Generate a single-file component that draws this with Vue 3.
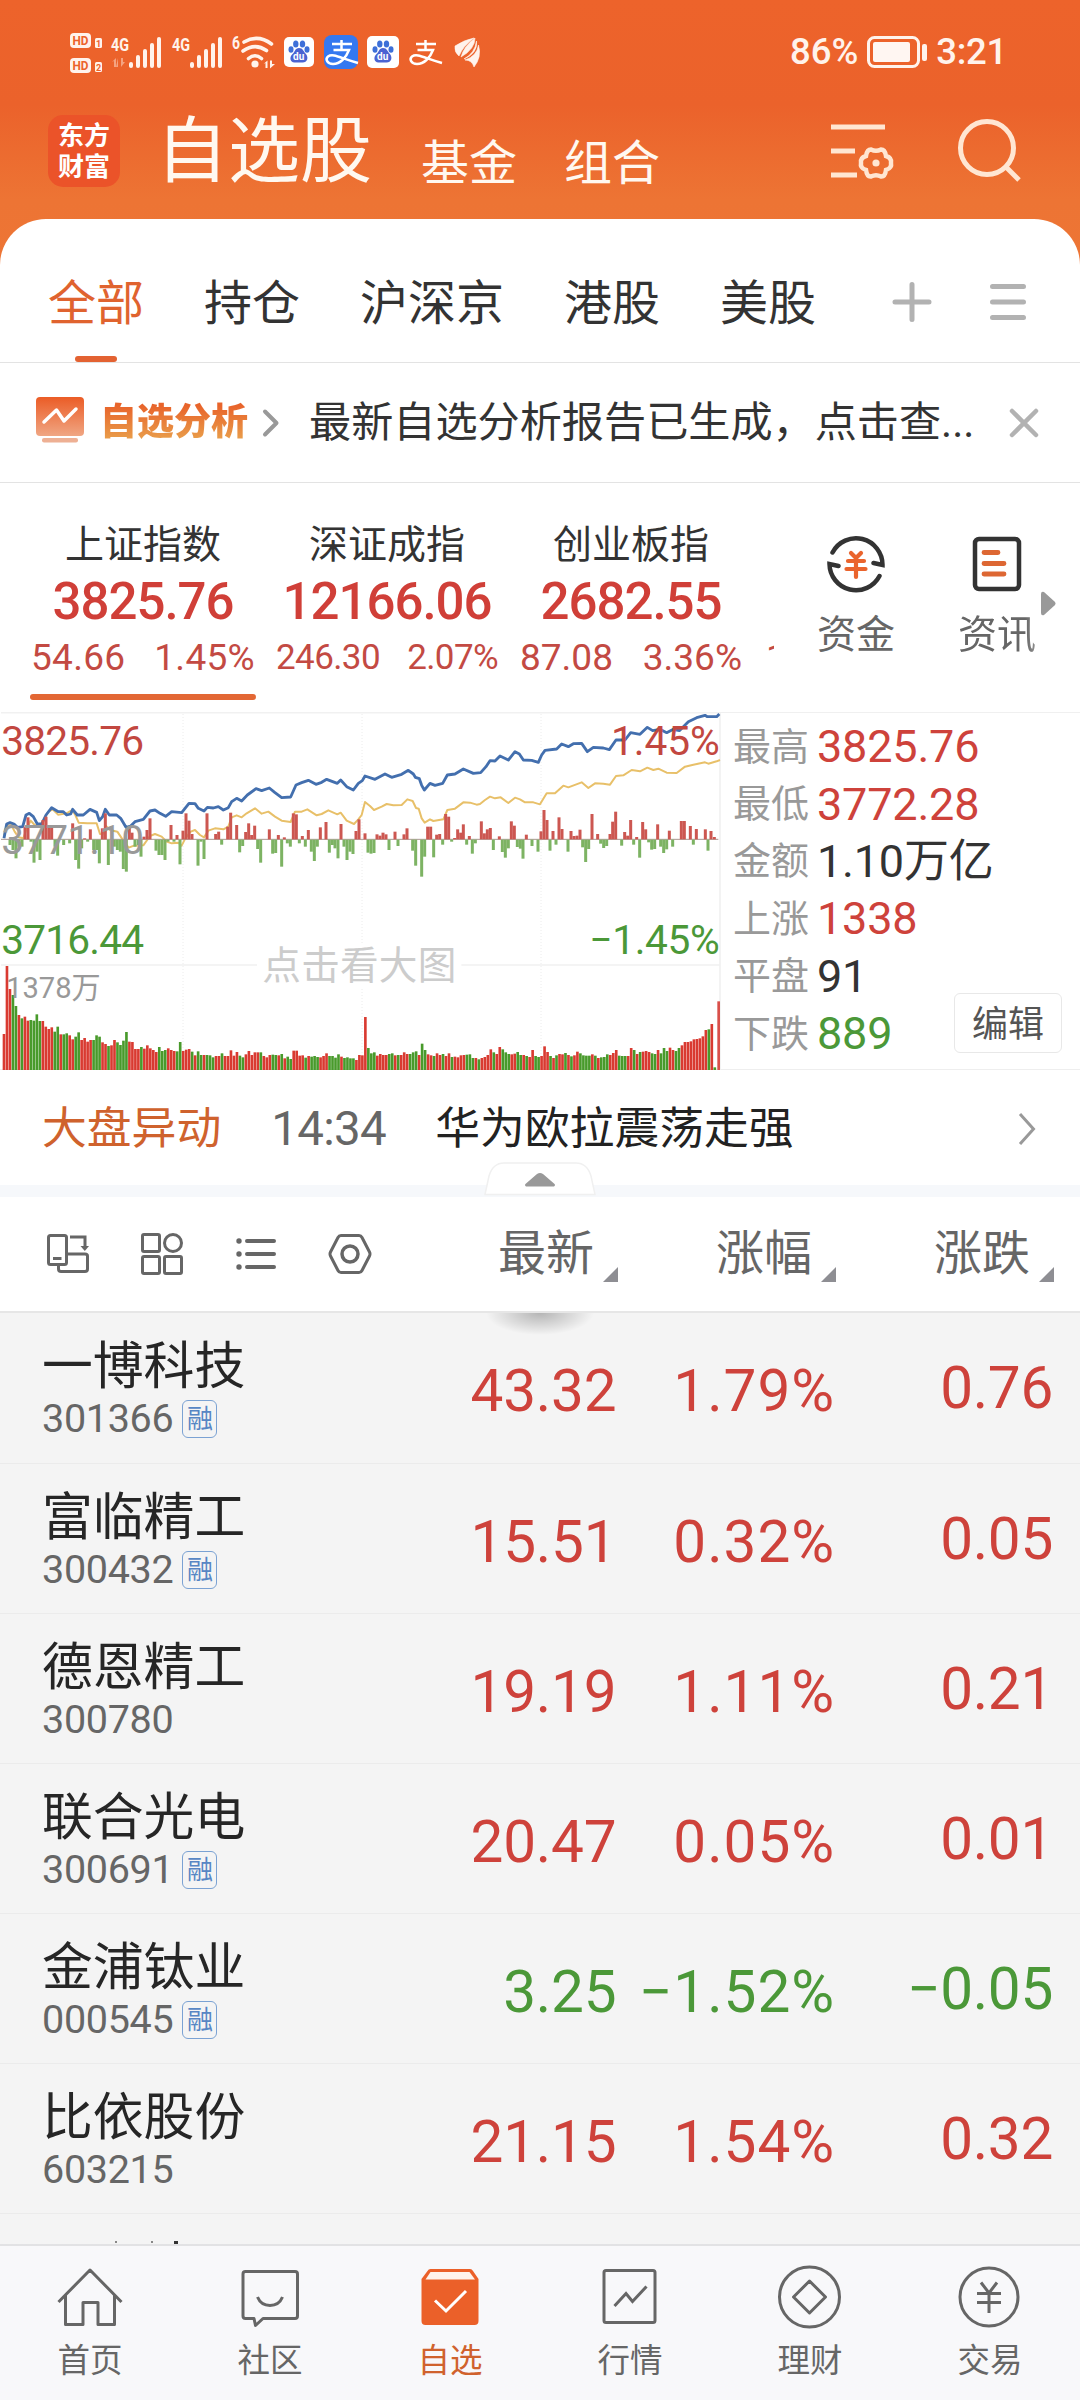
<script setup>
const tabs = ['全部', '持仓', '沪深京', '港股', '美股']

const indices = [
  { name: '上证指数', value: '3825.76', diff: '54.66', pct: '1.45%' },
  { name: '深证成指', value: '12166.06', diff: '246.30', pct: '2.07%', small: true },
  { name: '创业板指', value: '2682.55', diff: '87.08', pct: '3.36%' },
]

const stats = [
  { label: '最高', value: '3825.76', tone: 'up' },
  { label: '最低', value: '3772.28', tone: 'up' },
  { label: '金额', value: '1.10万亿', tone: 'flat' },
  { label: '上涨', value: '1338', tone: 'up' },
  { label: '平盘', value: '91', tone: 'flat' },
  { label: '下跌', value: '889', tone: 'down' },
]

const stocks = [
  { name: '一博科技', code: '301366', margin: true, price: '43.32', pct: '1.79%', diff: '0.76', tone: 'up' },
  { name: '富临精工', code: '300432', margin: true, price: '15.51', pct: '0.32%', diff: '0.05', tone: 'up' },
  { name: '德恩精工', code: '300780', margin: false, price: '19.19', pct: '1.11%', diff: '0.21', tone: 'up' },
  { name: '联合光电', code: '300691', margin: true, price: '20.47', pct: '0.05%', diff: '0.01', tone: 'up' },
  { name: '金浦钛业', code: '000545', margin: true, price: '3.25', pct: '−1.52%', diff: '−0.05', tone: 'down' },
  { name: '比依股份', code: '603215', margin: false, price: '21.15', pct: '1.54%', diff: '0.32', tone: 'up' },
]

// Chart coordinates are stored at three units per pixel.
const price = '12,415 20,372 30,368 42,372 52,382 68,380 78,345 88,340 100,350 112,372 125,372 138,345 155,323 175,335 190,335 200,345 212,342 218,328 232,345 250,345 270,328 290,337 298,362 308,350 316,328 328,345 350,345 362,355 378,382 392,378 405,365 430,358 450,333 465,330 480,340 497,349 515,335 545,338 567,310 585,311 595,325 612,333 622,322 640,324 655,320 670,330 685,323 695,305 710,295 725,303 742,285 768,266 785,272 808,264 825,278 845,293 872,291 888,255 905,248 925,241 948,253 965,247 980,238 1012,250 1022,240 1040,260 1060,270 1075,250 1087,242 1095,228 1125,238 1155,222 1175,232 1205,223 1225,211 1240,222 1246,232 1258,236 1265,256 1273,270 1290,250 1305,256 1328,250 1342,225 1365,222 1390,207 1420,220 1442,218 1458,200 1470,182 1485,183 1500,168 1525,180 1545,155 1558,162 1570,180 1595,181 1615,187 1625,165 1635,151 1670,147 1685,132 1705,140 1720,131 1745,130 1762,155 1780,142 1810,144 1828,149 1848,120 1875,120 1892,98 1920,103 1942,82 1958,92 1980,88 2000,98 2020,88 2038,92 2065,65 2090,53 2115,46 2122,50 2150,50 2158,42'
const average = '12,405 22,378 34,375 44,395 56,412 70,415 80,385 92,362 104,375 118,380 130,360 145,335 158,328 174,344 200,340 216,330 226,345 236,368 262,370 290,370 300,402 308,402 318,378 330,390 352,395 362,410 372,425 386,443 402,437 430,436 450,408 465,402 485,410 500,425 515,430 535,428 545,437 556,415 572,395 585,390 600,405 612,412 625,392 645,385 670,388 685,380 695,352 710,346 725,352 740,340 765,325 785,341 805,335 825,350 845,362 872,366 885,335 905,335 922,328 950,346 965,342 985,331 1012,343 1022,338 1040,362 1062,372 1075,358 1085,345 1095,306 1110,318 1122,330 1145,320 1160,312 1180,316 1205,315 1222,298 1238,303 1248,324 1256,326 1265,355 1274,368 1290,358 1300,363 1330,358 1342,330 1365,326 1390,307 1410,308 1430,314 1440,312 1455,300 1470,290 1485,295 1502,292 1525,309 1545,293 1560,298 1575,307 1600,307 1620,313 1640,280 1665,280 1690,257 1705,262 1745,247 1765,264 1785,250 1810,251 1830,254 1848,228 1870,226 1895,210 1920,214 1942,203 1960,210 1975,206 2000,218 2030,219 2055,200 2080,194 2115,187 2125,191 2150,184 2160,180'

const up = [75,380,84,352,129,360,138,350,147,380,155,383,218,370,254,415,271,388,307,385,316,340,388,380,396,398,432,410,441,390,450,355,513,375,531,405,549,392,558,340,567,362,576,402,621,340,647,402,656,395,683,380,692,338,710,375,737,396,746,370,755,405,764,377,808,388,835,405,853,412,880,340,889,343,907,408,925,390,961,382,978,366,1023,372,1068,393,1077,358,1095,400,1131,403,1140,407,1149,398,1158,403,1185,395,1212,403,1221,385,1283,380,1292,380,1310,404,1319,402,1337,342,1346,350,1364,414,1373,388,1382,398,1390,373,1408,408,1444,364,1453,400,1462,388,1471,384,1498,409,1534,364,1543,377,1579,404,1623,394,1632,330,1641,360,1659,393,1677,352,1686,387,1713,393,1722,408,1731,407,1740,389,1776,342,1793,402,1830,402,1838,365,1847,335,1874,396,1883,407,1892,360,1910,411,1928,366,1937,388,1973,373,2008,392,2044,363,2053,363,2071,378,2089,387,2116,388,2133,393,2143,411]
const down = [30,435,39,450,48,475,57,440,66,440,93,425,102,488,111,455,120,480,165,440,173,467,191,435,209,430,227,480,236,506,245,445,263,425,281,450,290,450,298,490,325,495,343,440,352,450,361,455,370,507,379,515,405,440,415,435,423,470,468,452,477,465,486,465,495,480,504,425,522,425,540,493,594,497,603,425,612,477,665,434,719,457,728,438,773,447,782,488,818,461,827,459,845,500,862,430,871,440,898,430,916,440,934,455,943,483,952,440,988,458,997,435,1005,445,1014,475,1032,440,1041,480,1050,455,1059,462,1104,458,1113,461,1122,459,1167,450,1194,438,1238,452,1247,497,1265,530,1274,470,1301,472,1328,434,1355,425,1400,434,1417,461,1426,430,1480,450,1507,456,1516,473,1525,445,1552,441,1561,446,1569,476,1596,438,1614,455,1650,452,1668,434,1704,455,1748,442,1757,486,1766,447,1802,431,1811,444,1820,438,1865,437,1901,434,1919,473,1946,427,1955,449,1964,447,1982,440,1991,459,2000,448,2018,440,2080,434,2124,452]
const pairs = (a) => a.reduce((r, v, i) => (i % 2 ? r[r.length - 1].push(v) : r.push([v]), r), [])
const upBars = pairs(up)
const downBars = pairs(down)

// Minute volume: positive closes higher, negative closes lower.
const volume = [108,312,243,-225,-192,165,-155,160,148,-150,-148,-167,-147,147,130,123,128,-115,-130,107,-107,-110,104,92,-100,-113,90,96,85,90,-90,-104,-100,83,78,-72,74,90,-83,-75,-88,-114,85,84,63,63,-69,64,74,65,60,54,-69,-57,-60,65,60,57,-56,-84,57,61,63,-55,44,-56,-45,45,-45,-44,-38,42,42,-50,42,42,59,43,54,-43,-38,47,57,45,53,53,-53,42,38,45,-46,-45,44,-48,35,-40,-33,58,58,43,44,-37,42,-40,-42,-39,38,42,50,-42,-42,-37,-47,40,-36,-38,-35,-35,30,45,44,159,-66,-50,-53,43,48,45,45,-48,-50,44,-45,45,53,48,-48,-53,-56,45,-79,-60,47,44,-42,50,45,-48,42,50,-39,40,38,44,45,-46,-47,-36,36,-32,36,39,45,62,-53,48,69,-62,-53,-48,47,49,-54,-45,45,-42,39,60,-42,-39,42,71,54,-42,36,-44,48,47,-51,45,-41,44,55,-50,-44,-43,-43,47,-43,36,-38,-39,-47,45,51,60,-43,-42,-42,42,66,-60,48,-54,55,57,54,-50,-48,60,-50,-66,-57,67,60,-57,-66,74,84,84,86,92,93,95,101,120,-122,138,-8]
</script>

<template>
  <div class="screen" lang="zh-CN">
    <header class="top">
      <div class="status">
        <svg class="status-icons" viewBox="66 28 420 48" width="420" height="48">
          <g fill="#fff3ec">
            <rect x="70" y="33" width="21" height="15" rx="4" />
            <rect x="70" y="58" width="21" height="15" rx="4" />
            <rect x="95" y="38" width="7" height="10" rx="1.5" />
            <rect x="95" y="62" width="7" height="10" rx="1.5" />
            <rect x="129" y="62" width="4" height="6" rx="2" /><rect x="136" y="55" width="4" height="13" rx="2" /><rect x="143" y="49" width="4" height="19" rx="2" /><rect x="150" y="43" width="4" height="25" rx="2" /><rect x="157" y="37" width="4" height="31" rx="2" />
            <rect x="190" y="62" width="4" height="6" rx="2" /><rect x="197" y="55" width="4" height="13" rx="2" /><rect x="204" y="49" width="4" height="19" rx="2" /><rect x="211" y="43" width="4" height="25" rx="2" /><rect x="218" y="37" width="4" height="31" rx="2" />
            <circle cx="255" cy="64" r="3.6" />
            <path d="M112 62l4-4v9h-2v-6zM118 58v9h-2M121 58v9l4-5h-2v-4z" opacity=".45" />
            <path d="M263.500 64l4-3.500v7.500h-2v-5zM270 60.500v8l5-4.500h-3v-3.500z" />
          </g>
          <g fill="none" stroke="#fff3ec" stroke-width="3.600" stroke-linecap="round">
            <path d="M244 42Q258 34 271.500 44" /><path d="M243 51Q255 42.500 266.500 50.500" /><path d="M248.500 58.500Q255 53 261.500 58.500" />
          </g>
          <g class="st">
            <text x="72.500" y="45" font-size="13.500" textLength="16" lengthAdjust="spacingAndGlyphs" fill="#ec622b">HD</text>
            <text x="72.500" y="70" font-size="13.500" textLength="16" lengthAdjust="spacingAndGlyphs" fill="#ec622b">HD</text>
            <text x="96" y="46.500" font-size="9" fill="#ec622b">1</text>
            <text x="96" y="70.500" font-size="9" fill="#ec622b">2</text>
            <text x="111" y="50.500" font-size="19" textLength="18" lengthAdjust="spacingAndGlyphs" fill="#fff3ec">4G</text>
            <text x="172" y="50.500" font-size="19" textLength="18" lengthAdjust="spacingAndGlyphs" fill="#fff3ec">4G</text>
            <text x="232" y="49" font-size="18" textLength="8" lengthAdjust="spacingAndGlyphs" fill="#fff3ec">6</text>
          </g>
          <rect x="284" y="37" width="30" height="30" rx="5" fill="#fff" />
          <rect x="367" y="36" width="32" height="32" rx="5" fill="#fff" />
          <g v-for="x in [299, 383]" :key="x" :transform="`translate(${x} 52)`" fill="#3d6fd8">
            <ellipse cx="-3.200" cy="-8" rx="2.700" ry="3.600" /><ellipse cx="3.500" cy="-8" rx="2.700" ry="3.600" />
            <ellipse cx="-8" cy="-2.500" rx="2.500" ry="3.200" /><ellipse cx="8" cy="-2.500" rx="2.500" ry="3.200" />
            <path d="M0-4C4-4 4-1 7 2C10 6 8 11 3 10.500H-4C-9 11-10 5-6.500 2C-4 0-4-4 0-4Z" fill="#4a63d2" />
            <text x="-6" y="8" font-size="10" font-weight="700" fill="#fff">du</text>
          </g>
          <rect x="324" y="35" width="34" height="34" rx="8" fill="#3478f0" />
          <g v-for="x in [325, 409]" :key="'z' + x" :transform="`translate(${x} 38)`" fill="none" stroke="#fff" stroke-width="2.500">
            <path d="M7 6H27M16.500 2V12M8.500 12H24C21 20 15 26 8 26C2 26 0 21 3 18.500C8 15 15 20 33 25" />
          </g>
          <path d="M455 46Q464 40 474 38Q463 46 459 56Q454 52 455 46ZM475 38Q475 49 461 57Q464 46 475 38ZM476.500 41Q478 53 464 59Q475 53 476.500 41ZM478.500 45Q482 57 474 67Q472 60 465 60Q477 56 478.500 45Z" fill="#fff3ec" stroke="#fff3ec" stroke-width=".6" />
        </svg>
        <div class="battery">
          <span>86%</span>
          <svg viewBox="0 0 62 34" width="62" height="34"><rect x="1.500" y="2.500" width="50" height="29" rx="6" fill="none" stroke="#fff3ec" stroke-width="3" /><rect x="6" y="7" width="37" height="20" rx="2" fill="#fff6f2" /><rect x="55" y="9" width="5" height="17" rx="2" fill="#fff3ec" /></svg>
          <span>3:21</span>
        </div>
      </div>
      <div class="title">
        <div class="logo"><span>东方</span><span>财富</span></div>
        <h1>自选股</h1>
        <span class="sub">基金</span>
        <span class="sub">组合</span>
        <svg class="settings" viewBox="831 118 66 66" width="66" height="66" fill="none" stroke="#ffe6d2" stroke-width="5">
          <path d="M831 127H885M831 151H855M831 175H857" />
          <path d="M871 149.500Q876 152 881 149.500Q885 149.500 886 156Q892 158 891 163Q892 168 886 170Q885 177 881 176.500Q876 174 871 176.500Q867 177 866 170Q860 168 861 163Q860 158 866 156Q867 149.500 871 149.500Z" stroke-width="4.500" />
          <circle cx="876" cy="163" r="3.600" fill="#ffe6d2" stroke="none" />
        </svg>
        <svg class="search" viewBox="956 118 66 66" width="66" height="66" fill="none" stroke="#ffe6d2" stroke-width="5"><circle cx="987" cy="148" r="26.500" /><path d="M1005 166L1019 180" /></svg>
      </div>
    </header>

    <nav class="tabs">
      <span v-for="(t, i) in tabs" :key="t" class="tab" :class="{ on: i === 0 }">{{ t }}</span>
      <svg class="add" viewBox="0 0 40 40" width="40" height="40"><path d="M20 2.500V37.500M3 20H37" stroke="#b2b2b2" stroke-width="5" stroke-linecap="round" /></svg>
      <svg viewBox="0 0 40 40" width="40" height="40"><path d="M4.500 4.500H35.500M4.500 20H35.500M4.500 35.500H35.500" stroke="#b2b2b2" stroke-width="5" stroke-linecap="round" /></svg>
    </nav>

    <section class="banner">
      <svg viewBox="0 0 48 46" width="48" height="46">
        <defs><linearGradient id="bg" x1="0" y1="0" x2="0" y2="1"><stop offset="0" stop-color="#eb5c26" /><stop offset="1" stop-color="#f0a683" /></linearGradient></defs>
        <rect width="48" height="39" rx="4" fill="url(#bg)" /><rect x="6" y="41" width="36" height="4.500" rx="2" fill="#eeb094" />
        <path d="M8 25L20.500 13L28 24L40 12" fill="none" stroke="#fff" stroke-width="3.500" stroke-linecap="round" stroke-linejoin="round" />
      </svg>
      <strong>自选分析</strong>
      <svg class="chev" viewBox="0 0 18 30" width="18" height="30"><path d="M3 3.500L14.500 15L3 26.500" fill="none" stroke="#999" stroke-width="4" stroke-linecap="round" stroke-linejoin="round" /></svg>
      <p>最新自选分析报告已生成，点击查...</p>
      <svg viewBox="0 0 32 32" width="32" height="32"><path d="M4 4L28 28M28 4L4 28" stroke="#b2b2b2" stroke-width="4.500" stroke-linecap="round" /></svg>
    </section>

    <section class="indices">
      <div class="index-list">
        <div v-for="(x, i) in indices" :key="x.name" class="index" :class="{ on: i === 0, small: x.small }">
          <div class="iname">{{ x.name }}</div>
          <div class="ivalue">{{ x.value }}</div>
          <div class="idiff"><span>{{ x.diff }}</span><span>{{ x.pct }}</span></div>
        </div>
        <div class="index next"><div class="iname"></div><div class="ivalue"></div><div class="idiff"><span>1</span></div></div>
      </div>
      <div class="shortcut">
        <svg viewBox="0 0 60 60" width="60" height="60" fill="none" stroke-width="4.500">
          <g stroke="#333" stroke-linecap="round"><path d="M6.500 18.500A26.500 26.500 0 0 1 56.500 31L47.500 29M53.500 42A26.500 26.500 0 0 1 3.500 30L12.500 32" /></g>
          <g stroke="#ea642d" stroke-linecap="round"><path d="M25 19L30 24L35 19M22 27H38M20.500 35H39.500M30 25V43" stroke-width="4.200" /></g>
        </svg>
        <span>资金</span>
      </div>
      <div class="shortcut news">
        <svg viewBox="0 0 60 60" width="60" height="60" fill="none">
          <rect x="8" y="5" width="44" height="50" rx="4" stroke="#333" stroke-width="4.500" />
          <path d="M17 18.500H31M17 29.500H37M17 40H37" stroke="#dd6733" stroke-width="4.800" stroke-linecap="round" />
        </svg>
        <span>资讯</span>
      </div>
      <svg class="more" viewBox="0 0 15 25" width="15" height="25"><path d="M0 3Q0 0 3 1L13.500 10.500Q15.500 12.500 13.500 14.500L3 24Q0 25 0 22Z" fill="#999" /></svg>
    </section>

    <section class="market">
      <svg class="chart" viewBox="0 36 2163 1074" width="721" height="358">
        <g stroke="#f1f1f1" stroke-width="5" fill="none"><path d="M3 38H2160V1110M3 795H771M1384 795H2160" /></g>
        <g stroke="#ececec" stroke-width="3" stroke-dasharray="3 6"><path d="M549 42V1110M1086 42V735M1086 867V1110M1623 42V1110" /></g>
        <polyline :points="average" fill="none" stroke="#e8c069" stroke-width="6" stroke-linejoin="round" />
        <polyline :points="price" fill="none" stroke="#436fae" stroke-width="8.500" stroke-linejoin="round" />
        <path d="M3 418H2155" stroke="#aa9690" stroke-width="3" />
        <rect v-for="b in upBars" :key="'u' + b[0]" :x="b[0] - 4.500" :y="b[1]" width="9" :height="418 - b[1]" fill="#cc5751" />
        <rect v-for="b in downBars" :key="'d' + b[0]" :x="b[0] - 4.500" y="419" width="9" :height="b[1] - 419" fill="#7db363" />
        <g font-size="122">
          <text x="4" y="164" textLength="428" fill="#c24740">3825.76</text>
          <text x="4" y="461" textLength="428" fill="#999">3771.10</text>
          <text x="4" y="761" textLength="428" fill="#4b9838">3716.44</text>
          <text x="1833" y="164" textLength="326" fill="#c24740">1.45%</text>
          <text x="1768" y="761" textLength="391" fill="#4b9838">−1.45%</text>
        </g>
        <rect v-for="(v, i) in volume" :key="'v' + i" :x="8 + i * 8.960" :y="1110 - Math.abs(v)" width="7.900" :height="Math.abs(v)" :fill="v > 0 ? '#d93a31' : '#489a2b'" />
        <rect x="2152" y="904" width="8" height="206" fill="#d9504a" />
        <text x="18" y="893" font-size="90" textLength="284" lengthAdjust="spacingAndGlyphs" fill="#999">1378万</text>
        <text x="787" y="836" font-size="116" textLength="582" fill="#ccc">点击看大图</text>
      </svg>
      <dl class="stats">
        <div v-for="s in stats" :key="s.label"><dt>{{ s.label }}</dt><dd :class="s.tone">{{ s.value }}</dd></div>
      </dl>
      <button class="edit">编辑</button>
    </section>

    <section class="event">
      <b>大盘异动</b><time>14:34</time><span>华为欧拉震荡走强</span>
      <svg viewBox="0 0 18 34" width="18" height="34"><path d="M2 2L15.500 17L2 32" fill="none" stroke="#999" stroke-width="3" /></svg>
      <svg class="handle" viewBox="0 0 112 34" width="112" height="34"><path d="M1 32.500L5 14Q9 1 20 1H92Q103 1 107 14L111 32.500Z" fill="#fff" stroke="#f0f0f0" stroke-width="1.500" /><path d="M42 24.500Q40 23 42 21.500L53 12Q56 10 59 12L70 21.500Q72 23 70 24.500Z" fill="#999" /></svg>
    </section>

    <section class="toolbar">
      <div class="tools">
        <svg viewBox="0 0 44 44" width="44" height="44" fill="none" stroke="#666" stroke-width="3"><rect x="2.500" y="3.500" width="18" height="29" rx="2" /><path d="M7 26.500H15.500M24 5H39V15M12.500 33V37Q12.500 39.500 15 39.500H39Q41.500 39.500 41.500 37V24Q41.500 22 39 22H21" /><path d="M34.500 14H43L38.800 19Z" fill="#666" stroke="none" /></svg>
        <svg viewBox="0 0 44 44" width="44" height="44" fill="none" stroke="#666" stroke-width="3"><rect x="2.500" y="2.500" width="17" height="17" rx="1.500" /><circle cx="33" cy="11" r="8.500" /><rect x="2.500" y="24.500" width="17" height="17" rx="1.500" /><rect x="24.500" y="24.500" width="17" height="17" rx="1.500" /></svg>
        <svg viewBox="0 0 44 44" width="44" height="44" stroke="#666" fill="#666"><path d="M13 9H40M13 22H40M13 35H40" stroke-width="4" stroke-linecap="round" /><g stroke="none"><circle cx="5" cy="9" r="2.700" /><circle cx="5" cy="22" r="2.700" /><circle cx="5" cy="35" r="2.700" /></g></svg>
        <svg viewBox="0 0 44 44" width="44" height="44" fill="none" stroke="#666" stroke-width="3"><path d="M13 3.500H31Q33 3.500 34 5.500L41.500 20Q42.500 22 41.500 24L34 38.500Q33 40.500 31 40.500H13Q11 40.500 10 38.500L2.500 24Q1.500 22 2.500 20L10 5.500Q11 3.500 13 3.500Z" /><circle cx="22" cy="22" r="8" stroke-width="3.500" /></svg>
      </div>
      <span class="col">最新<i></i></span>
      <span class="col">涨幅<i></i></span>
      <span class="col">涨跌<i></i></span>
    </section>

    <main class="list">
      <div class="glow"></div>
      <div v-for="s in stocks" :key="s.code" class="row" :class="s.tone">
        <div class="who">
          <div class="name">{{ s.name }}</div>
          <div class="code"><span>{{ s.code }}</span><em v-if="s.margin">融</em></div>
        </div>
        <div class="num">{{ s.price }}</div>
        <div class="num pct">{{ s.pct }}</div>
        <div class="num last">{{ s.diff }}</div>
      </div>
      <div class="peek"><i></i><i></i><i></i></div>
    </main>

    <footer class="nav">
      <div>
        <svg viewBox="0 0 66 66" width="66" height="66" fill="none" stroke="#666" stroke-width="3"><path d="M1.500 37L33 5L64.500 37M8.500 30V59.500H26V37.500H41V59.500H57.500V30" stroke-linejoin="round" /></svg><span>首页</span>
      </div>
      <div>
        <svg viewBox="0 0 66 66" width="66" height="66" fill="none" stroke="#666" stroke-width="3"><path d="M8.500 6.500H58Q60.500 6.500 60.500 9V51Q60.500 53.500 58 53.500H26L18.500 60.500L17 53.500H8.500Q6 53.500 6 51V9Q6 6.500 8.500 6.500Z" stroke-linejoin="round" /><path d="M20.500 32Q24 40.500 33 40.500Q42 40.500 45.500 32" /></svg><span>社区</span>
      </div>
      <div class="on">
        <svg viewBox="0 0 66 66" width="66" height="66"><path d="M13.500 4H53Q55 4 56 6L61.500 14V56Q61.500 60 57.500 60H8.500Q4.500 60 4.500 56V14L10.500 6Q11.500 4 13.500 4Z" fill="#eb6029" /><path d="M13.500 7H52.500L58 14.500H8.500Z" fill="#fff3ec" /><path d="M18 35.500L29 46L49 26" fill="none" stroke="#fff" stroke-width="3" /></svg><span>自选</span>
      </div>
      <div>
        <svg viewBox="0 0 66 66" width="66" height="66" fill="none" stroke="#666" stroke-width="3"><rect x="7" y="5.500" width="51" height="52" rx="2" /><path d="M17.500 41L29 28.500L35.500 36.500L49.500 21.500" /></svg><span>行情</span>
      </div>
      <div>
        <svg viewBox="0 0 66 66" width="66" height="66" fill="none" stroke="#666" stroke-width="3"><circle cx="32.500" cy="32" r="30" /><path d="M32.500 16L48.500 32L32.500 48L16.500 32Z" stroke-linejoin="round" /></svg><span>理财</span>
      </div>
      <div>
        <svg viewBox="0 0 66 66" width="66" height="66" fill="none" stroke="#666" stroke-width="3"><circle cx="32" cy="32" r="29" /><path d="M24 17.500L32 28L40 17.500M20 28.500H44M20 37.500H44M32 28V48" /></svg><span>交易</span>
      </div>
    </footer>
  </div>
</template>

<style>
body { margin: 0; background: #fff; }
</style>

<style scoped>
.screen { width: 1080px; height: 2400px; overflow: hidden; display: flex; flex-direction: column; background: #fff; font-family: Roboto, "Noto Sans CJK SC", sans-serif; color: #333; line-height: 1; white-space: nowrap; }
.screen > * { box-sizing: border-box; flex: none; }
svg { display: block; flex: none; }
.up { color: #ce423b; }
.down { color: #4b9838; }
.flat { color: #333; }

.top { height: 265px; margin-bottom: -46px; background: linear-gradient(#ed632b 0, #eb622b 105px, #ed7434 200px, #ed7535 100%); }
.status { height: 104px; display: flex; justify-content: space-between; align-items: center; padding: 0 73px 0 66px; box-sizing: border-box; color: #fff3ec; }
.st text { font-weight: 700; }
.battery { display: flex; align-items: center; font-size: 36.500px; font-weight: 500; gap: 8px; }
.battery span:last-child { letter-spacing: -.3px; margin-left: -1px; }
.battery svg { margin-left: 1px; }
.title { height: 94px; display: flex; align-items: center; padding: 0 58px 0 48px; color: #fff8f0; }
.logo { width: 72px; height: 72px; border-radius: 15px; background: #eb5329; display: flex; flex-direction: column; justify-content: center; align-items: center; gap: 5px; font-size: 26px; font-weight: 700; color: #fff; }
h1 { margin: 2px 0 0 36px; font-size: 72px; font-weight: 400; line-height: 94px; width: 221px; }
.sub { font-size: 48px; margin: 25px 0 0 44px; width: 96px; }
.sub + .sub { margin-left: 47px; }
.settings { margin-left: auto; }
.search { margin-left: 59px; }

.tabs { height: 144px; border-radius: 46px 46px 0 0; background: #fff; border-bottom: 1px solid #e3e3e3; display: flex; align-items: center; gap: 60px; padding: 23px 52px 0 48px; font-size: 48px; }
.tab { height: 120px; line-height: 124px; display: flex; flex-direction: column; align-items: center; }
.tab.on { color: #e0632f; }
.tab.on::after { content: ""; width: 42px; height: 6px; border-radius: 3px; background: #e36232; margin-top: -10px; }
.add { margin-left: 16px; }
.tabs svg { margin-right: -4px; }
.tabs svg:last-child { margin-left: auto; margin-right: 0; }

.banner { height: 120px; border-bottom: 1px solid #e3e3e3; display: flex; align-items: center; padding: 0 40px 0 36px; }
.banner > svg:first-child { margin-top: -5px; }
.banner strong { margin-left: 16px; font-size: 37px; font-weight: 900; line-height: 50px; background: linear-gradient(#e8642b 15%, #e99f4b 85%); -webkit-background-clip: text; background-clip: text; color: transparent; }
.chev { margin-left: 14px; }
.banner p { margin: 0 auto 0 29px; font-size: 42.150px; line-height: 60px; }

.indices { height: 229px; display: flex; }
.index-list { width: 774px; overflow: hidden; display: flex; padding-left: 21px; box-sizing: border-box; }
.index { flex: none; width: 244px; display: flex; flex-direction: column; align-items: center; }
.iname { height: 45px; margin-top: 40px; font-size: 39px; line-height: 45px; }
.ivalue { height: 56px; font-size: 51px; line-height: 56px; margin-top: 6px; font-weight: 500; letter-spacing: -1px; color: #d03f38; }
.idiff { width: 222px; height: 40px; margin-top: 8px; display: flex; justify-content: space-between; font-size: 37px; line-height: 40px; color: #c34a43; }
.small .idiff { font-size: 35px; letter-spacing: -.6px; }
.on .idiff { width: 224px; letter-spacing: .3px; }
.index.on::after { content: ""; width: 226px; height: 6px; border-radius: 3px; background: #e36734; margin-top: 16px; }
.next .idiff { width: 240px; padding-left: 11px; box-sizing: border-box; }
.shortcut { width: 142px; margin-left: 11px; display: flex; flex-direction: column; align-items: center; padding-top: 51px; font-size: 39px; line-height: 44px; color: #666; }
.shortcut span { margin-top: 19px; }
.news { margin-left: -1px; -webkit-mask: linear-gradient(90deg, #000 70%, #0008 82%); mask: linear-gradient(90deg, #000 70%, #0008 82%); }
.more { margin: 108px 0 0 -27px; }

.market { height: 358px; display: flex; position: relative; border-bottom: 1px solid #eee; }
.market::before { content: ""; position: absolute; left: 720px; right: 0; top: 0; height: 1px; background: #f0f0f0; }
.stats { margin: 6px 0 0 12px; }
.stats div { height: 57.400px; display: flex; align-items: center; gap: 8px; }
.stats dt { font-size: 38px; color: #999; }
.stats dd { margin: 0; font-size: 45px; line-height: 57px; letter-spacing: -.2px; }
.edit { position: absolute; left: 954px; top: 281px; width: 108px; height: 60px; border: 1px solid #e8e8e8; border-radius: 6px; background: #fff; padding: 3px 0 0; font: 36px/54px Roboto, "Noto Sans CJK SC", sans-serif; color: #555; }

.event { height: 127px; position: relative; border-bottom: 12px solid #f6f8fb; display: flex; align-items: center; padding: 4px 44px 0 42px; font-size: 44.800px; color: #222; }
.event b { font-weight: 400; color: #cf622d; }
.event time { margin: 0 48px 0 50px; font-size: 47.500px; color: #666; width: 116px; letter-spacing: -.7px; }
.event > svg:not(.handle) { margin: -2px 0 0 auto; }
.handle { position: absolute; left: 484px; bottom: -11px; }

.toolbar { height: 116px; border-bottom: 2px solid #e6e6e6; display: flex; align-items: center; padding: 0 26px 0 46px; font-size: 48px; color: #666; }
.tools { display: flex; gap: 50px; width: 354px; }
.col { display: flex; justify-content: flex-end; width: 218px; margin-top: -1px; }
.col i { width: 0; height: 0; border-left: 15px solid transparent; border-bottom: 15px solid #8e8e93; align-self: flex-end; margin: 0 0 -4px 9px; }

.list { height: 931px; background: #f4f4f4; overflow: hidden; position: relative; }
.glow { position: absolute; left: 486px; top: -22px; width: 108px; height: 44px; background: radial-gradient(closest-side, #00000042, #0000); }
.row { height: 150px; border-bottom: 1px solid #ebebeb; box-sizing: border-box; display: flex; padding-right: 27px; }
.row:nth-child(2) { height: 151px; }
.who { width: 354px; padding: 26px 0 0 42px; }
.name { font-size: 50.800px; line-height: 56px; color: #262626; }
.code { display: flex; align-items: center; height: 44px; margin-top: 2px; font-size: 39.500px; letter-spacing: -.3px; color: #666; }
.code em { margin-left: 9px; width: 35px; height: 38px; border: 1.500px solid #7ba2d3; border-radius: 6px; box-sizing: border-box; text-align: center; font-style: normal; font-size: 26px; line-height: 36px; letter-spacing: 0; color: #5786c4; }
.num { width: 218px; margin-top: 46px; line-height: 64px; font-size: 58.500px; text-align: right; }
.who + .num { width: 221px; padding-right: 1px; letter-spacing: -.2px; }
.pct { letter-spacing: 1px; }
.last { margin-top: 43px; letter-spacing: -.3px; }
.peek { display: flex; padding: 27px 0 0 115px; height: 3px; }
.peek i { width: 2px; height: 2px; background: #888; margin-right: 34px; }
.peek i:nth-child(2) { margin-right: 21px; }
.peek i:last-child { width: 4px; height: 3px; background: #333; }

.nav { height: 157px; background: #f8f8fa; border-top: 2px solid #e2e2e4; display: flex; font-size: 32.500px; color: #666; }
.nav div { width: 180px; display: flex; flex-direction: column; align-items: center; padding-top: 19px; }
.nav span { margin-top: 12px; line-height: 36px; }
.nav .on { color: #d0622d; }
</style>
